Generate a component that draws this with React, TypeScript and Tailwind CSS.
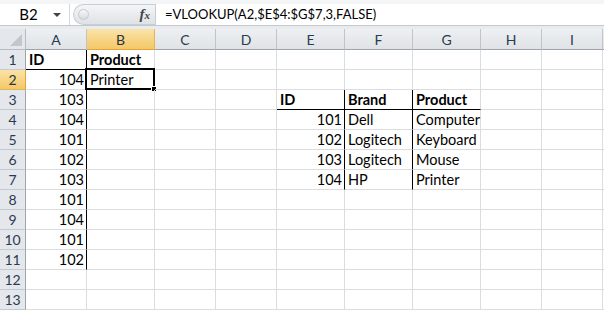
import React from 'react';

const cols = ['A', 'B', 'C', 'D', 'E', 'F', 'G', 'H', 'I'];

type CellData = { text?: string; bold?: boolean; right?: boolean };

const data: Record<string, CellData> = {
  A1: { text: 'ID', bold: true },
  B1: { text: 'Product', bold: true },
  A2: { text: '104', right: true },
  A3: { text: '103', right: true },
  A4: { text: '104', right: true },
  A5: { text: '101', right: true },
  A6: { text: '102', right: true },
  A7: { text: '103', right: true },
  A8: { text: '101', right: true },
  A9: { text: '104', right: true },
  A10: { text: '101', right: true },
  A11: { text: '102', right: true },
  B2: { text: 'Printer' },
  E3: { text: 'ID', bold: true },
  F3: { text: 'Brand', bold: true },
  G3: { text: 'Product', bold: true },
  E4: { text: '101', right: true },
  F4: { text: 'Dell' },
  G4: { text: 'Computer' },
  E5: { text: '102', right: true },
  F5: { text: 'Logitech' },
  G5: { text: 'Keyboard' },
  E6: { text: '103', right: true },
  F6: { text: 'Logitech' },
  G6: { text: 'Mouse' },
  E7: { text: '104', right: true },
  F7: { text: 'HP' },
  G7: { text: 'Printer' },
};

const blackRight = (c: string, r: number) =>
  (c === 'A' && r >= 1 && r <= 11) || ((c === 'E' || c === 'F') && r >= 3 && r <= 7);

const blackBottom = (c: string, r: number) =>
  (r === 1 && (c === 'A' || c === 'B')) || (r === 3 && (c === 'E' || c === 'F' || c === 'G'));

function Cell({ c, r }: { c: string; r: number }) {
  const d = data[`${c}${r}`];
  const selected = c === 'B' && r === 2;
  return (
    <div
      className={`relative h-5 border-r border-b px-[3px] leading-[19px] whitespace-nowrap ${
        blackRight(c, r) ? 'border-r-black' : 'border-r-[#dadcdd]'
      } ${blackBottom(c, r) ? 'border-b-black' : 'border-b-[#dadcdd]'} ${d?.right ? 'text-right pr-[2px]' : ''} ${
        d?.bold ? 'font-bold' : ''
      }`}
    >
      {d?.text}
      {selected && (
        <>
          <div className="absolute -left-[2px] -top-[2px] w-[70px] h-[22px] border-2 border-black pointer-events-none" />
          <div className="absolute -right-[3px] -bottom-[3px] w-[6px] h-[6px] bg-black border border-white" />
        </>
      )}
    </div>
  );
}

export default function App() {
  const rows = Array.from({ length: 13 }, (_, i) => i + 1);
  return (
    <div
      className="w-[604px] h-[310px] overflow-hidden bg-white text-[14.5px] text-black"
      style={{ fontFamily: 'Lato, "Liberation Sans", sans-serif' }}
    >
      {/* Formula bar */}
      <div className="h-[29px] bg-[#e9ecef] border-t-[4px] border-t-[#f4f5f6]">
        <div className="flex h-[22px] border-b border-[#c4c8cd] bg-white">
          <div className="relative w-[70px] flex items-center justify-center border-r border-[#d5d8dc]">
            <span className="pr-[12px] text-[15px]">B2</span>
            <span className="absolute right-[8px] top-[9px] w-0 h-0 border-l-[4px] border-r-[4px] border-t-[4px] border-l-transparent border-r-transparent border-t-[#444]" />
          </div>
          <div className="ml-[3px] w-[82px] flex items-center rounded-l-full bg-gradient-to-b from-[#f4f5f7] to-[#dfe2e6] border border-[#c9ccd1] border-r-0">
            <span className="ml-[4px] w-[11px] h-[11px] rounded-full bg-gradient-to-b from-[#f7f7f7] to-[#d8dbdf] border border-[#c6c9cd]" />
            <span
              className="ml-auto mr-[5px] text-[15px] italic font-bold text-[#444]"
              style={{ fontFamily: '"Liberation Serif", serif' }}
            >
              f<span className="text-[11px]">x</span>
            </span>
          </div>
          <div className="flex-1 border-l border-[#c9ccd1] pl-[9px] text-[13px] leading-[21px]">
            =VLOOKUP(A2,$E$4:$G$7,3,FALSE)
          </div>
        </div>
      </div>

      {/* Grid */}
      <div className="grid grid-cols-[26px_61px_68px_61px_61px_68px_68px_68px_61px_61px_1fr]">
        {/* Header row */}
        <div className="relative h-[21px] bg-[#e4e7eb] border-r border-b border-[#b7bbc1]">
          <span className="absolute right-[3px] bottom-[3px] w-0 h-0 border-b-[12px] border-l-[12px] border-b-[#c3c7cc] border-l-transparent" />
        </div>
        {cols.map((c) => (
          <div
            key={c}
            className={`h-[21px] flex items-center justify-center text-[14px] border-r ${
              c === 'B'
                ? 'bg-gradient-to-b from-[#fae3a8] to-[#f4c865] border-r-[#e2b45a] border-b border-b-[#e7a236] text-[#2b3340]'
                : 'bg-gradient-to-b from-[#eef0f2] to-[#dfe3e7] border-r-[#c0c4ca] border-b border-b-[#9fa4ab] text-[#2b3a4e]'
            }`}
          >
            {c}
          </div>
        ))}
        <div className="h-[21px] bg-gradient-to-b from-[#eef0f2] to-[#dfe3e7] border-b border-b-[#9fa4ab]" />

        {rows.map((r) => (
          <React.Fragment key={r}>
            <div
              className={`h-5 flex items-center justify-center text-[14px] border-r border-b ${
                r === 2
                  ? 'bg-gradient-to-b from-[#fae3a8] to-[#f4c865] border-r-[#e7a236] border-b-[#e2b45a] text-[#2b3340]'
                  : 'bg-[#e4e7eb] border-r-[#9fa4ab] border-b-[#c5c9ce] text-[#2b3a4e]'
              }`}
            >
              {r}
            </div>
            {cols.map((c) => (
              <Cell key={c} c={c} r={r} />
            ))}
            <div className="h-5 border-b border-b-[#dadcdd]" />
          </React.Fragment>
        ))}
      </div>
    </div>
  );
}
